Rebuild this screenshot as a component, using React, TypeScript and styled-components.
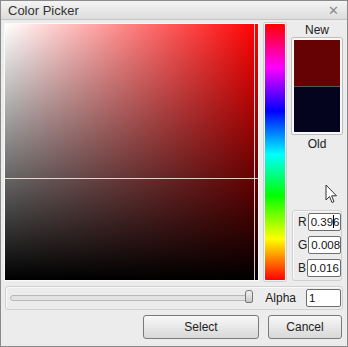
import styled, { createGlobalStyle } from "styled-components"

const Global = createGlobalStyle`
  html, body { margin: 0; padding: 0; background: #d8d8d8; }
  body { font-family: "Liberation Sans", Arial, sans-serif; font-size: 12px; color: #202020; }
`

const Win = styled.div`
  position: relative;
  width: 348px;
  height: 347px;
  box-sizing: border-box;
  border: 1px solid #8a8a8a;
  background: #ececec;
  display: flex;
  flex-direction: column;
`

const TitleBar = styled.div`
  height: 20px;
  display: flex;
  align-items: center;
  justify-content: space-between;
  padding: 0 8px 0 7px;
  background: linear-gradient(#f4f4f4, #dcdcdc);
  border-bottom: 1px solid #c4c4c4;
  font-size: 13px;
  color: #333;
`

const Close = styled.span`
  color: #8a8a8a;
  font-size: 13px;
  line-height: 1;
`

const Body = styled.div`
  flex: 1;
  display: flex;
  flex-direction: column;
  padding: 3px 4px 7px 3px;
  gap: 5px;
`

const TopRow = styled.div`
  display: flex;
  height: 258px;
`

const Field = styled.div`
  position: relative;
  width: 255px;
  box-sizing: border-box;
  border: 1px solid #fafafa;
  background: linear-gradient(to top, #000, rgba(0, 0, 0, 0)), linear-gradient(to right, #fff, #f00);
  overflow: hidden;
`

const LineV = styled.div`
  position: absolute;
  top: 0;
  bottom: 0;
  left: 249px;
  width: 1px;
  background: rgba(255, 235, 235, 0.85);
`

const LineH = styled.div`
  position: absolute;
  left: 0;
  right: 0;
  top: 154px;
  height: 1px;
  background: rgba(255, 235, 235, 0.85);
`

const Hue = styled.div`
  width: 22px;
  margin-left: 5px;
  box-sizing: border-box;
  border: 1px solid #f8f8f8;
  border-radius: 2px;
  box-shadow: 0 0 0 1px #cfcfcf;
  background: linear-gradient(#f00, #f0f 17%, #00f 34%, #0ff 51%, #0f0 67%, #ff0 84%, #f00);
`

const Side = styled.div`
  width: 50px;
  margin-left: 6px;
  display: flex;
  flex-direction: column;
`

const Caption = styled.div`
  text-align: center;
  height: 14px;
  line-height: 14px;
  font-size: 12px;
`

const Preview = styled.div`
  height: 96px;
  box-sizing: border-box;
  border: 2px solid #f8f8f8;
  box-shadow: 0 0 0 1px #bdbdbd;
  border-radius: 2px;
  display: flex;
  flex-direction: column;
  margin-top: 1px;
`

const Swatch = styled.div<{ $c: string }>`
  flex: 1;
  background: ${(p) => p.$c};
  & + & { border-top: 1px solid #555; }
`

const Spacer = styled.div`
  position: relative;
  flex: 1;
`

const Cursor = styled.svg`
  position: absolute;
  left: 33px;
  top: 33px;
`

const Group = styled.div`
  box-sizing: border-box;
  border: 1px solid #d0d0d0;
  border-radius: 3px;
  box-shadow: inset 1px 1px 0 #fafafa;
`

const RGB = styled(Group)`
  height: 71px;
  display: flex;
  flex-direction: column;
  justify-content: space-between;
  padding: 2px 0 3px 5px;
`

const Row = styled.div`
  display: flex;
  align-items: center;
  gap: 1px;
`

const Input = styled.div<{ $w: number }>`
  width: ${(p) => p.$w}px;
  height: 18px;
  box-sizing: border-box;
  border: 1px solid #6e6e6e;
  border-radius: 2px;
  background: #fff;
  padding: 0 1px 0 2px;
  line-height: 16px;
  font-size: 11.5px;
  color: #111;
  white-space: nowrap;
  overflow: hidden;
`

const Caret = styled.span`
  display: inline-block;
  width: 1px;
  height: 13px;
  background: #000;
  vertical-align: -2px;
  margin: 0 -1px 0 0;
`

const AlphaRow = styled(Group)`
  height: 24px;
  display: flex;
  align-items: center;
  padding: 0 1px 0 4px;
  margin-left: 1px;
`

const Track = styled.div`
  position: relative;
  flex: 1;
  height: 4px;
  border: 1px solid #b8b8b8;
  border-radius: 3px;
  background: #e2e2e2;
`

const Thumb = styled.div`
  position: absolute;
  right: -2px;
  top: -6px;
  width: 6px;
  height: 11px;
  border: 1px solid #777;
  border-radius: 3px 3px 2px 2px;
  background: linear-gradient(#f2f2f2, #c8c8c8);
`

const AlphaLabel = styled.span`
  margin: 0 10px 0 13px;
  font-size: 12px;
`

const Buttons = styled.div`
  display: flex;
  justify-content: flex-end;
  gap: 9px;
  padding-right: 1px;
`

const Button = styled.div<{ $w: number }>`
  width: ${(p) => p.$w}px;
  height: 24px;
  box-sizing: border-box;
  border: 1px solid #7a7a7a;
  border-radius: 3px;
  background: linear-gradient(#f8f8f8, #e6e6e6 55%, #d8d8d8);
  display: flex;
  align-items: center;
  justify-content: center;
  font-size: 12px;
  color: #222;
`

export default function App() {
  return (
    <>
      <Global />
      <Win>
        <TitleBar>
          <span>Color Picker</span>
          <Close>✕</Close>
        </TitleBar>
        <Body>
          <TopRow>
            <Field>
              <LineV />
              <LineH />
            </Field>
            <Hue />
            <Side>
              <Caption>New</Caption>
              <Preview>
                <Swatch $c="#650204" />
                <Swatch $c="#05041e" />
              </Preview>
              <Caption style={{ marginTop: 3 }}>Old</Caption>
              <Spacer>
                <Cursor width="13" height="20" viewBox="0 0 13 20">
                  <path d="M1 1 L1 16 L4.5 12.5 L7 18.5 L9 17.6 L6.6 11.8 L11.5 11.8 Z" fill="#fff" stroke="#333" strokeWidth="1" strokeLinejoin="round" />
                </Cursor>
              </Spacer>
              <RGB>
                <Row>R<Input $w={35}>0.39<Caret />6</Input></Row>
                <Row>G<Input $w={35}>0.008</Input></Row>
                <Row>B<Input $w={35}>0.016</Input></Row>
              </RGB>
            </Side>
          </TopRow>
          <AlphaRow>
            <Track>
              <Thumb />
            </Track>
            <AlphaLabel>Alpha</AlphaLabel>
            <Input $w={35}>1</Input>
          </AlphaRow>
          <Buttons>
            <Button $w={116}>Select</Button>
            <Button $w={74}>Cancel</Button>
          </Buttons>
        </Body>
      </Win>
    </>
  )
}
